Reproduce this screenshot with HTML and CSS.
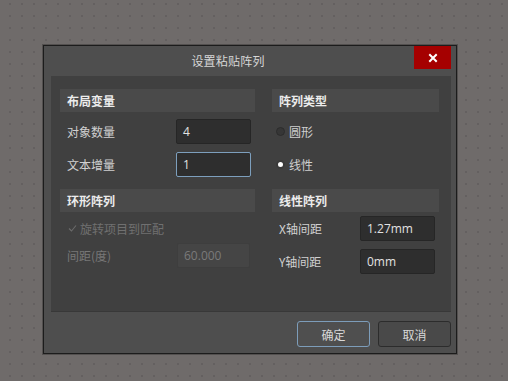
FILE: index.html
```html
<!DOCTYPE html>
<html>
<head>
<meta charset="utf-8">
<link rel="stylesheet" href="styles.css">
</head>
<body>
<div class="dialog">
  <div class="titlebar">
    <span class="title">设置粘贴阵列</span>
    <div class="close">
      <svg width="10" height="10" viewBox="0 0 10 10"><path d="M2 2 L8 8 M8 2 L2 8" stroke="#fff" stroke-width="2" stroke-linecap="square"/></svg>
    </div>
  </div>
  <div class="panel">
    <div class="col left">
      <div class="head">布局变量</div>
      <div class="row r1"><span class="label">对象数量</span><div class="input">4</div></div>
      <div class="row r2"><span class="label">文本增量</span><div class="input focus">1</div></div>
      <div class="head h2">环形阵列</div>
      <div class="check">
        <svg width="9" height="9" viewBox="0 0 9 9"><path d="M1 4.5 L3.5 7 L8 1.5" fill="none" stroke="#6b6b6b" stroke-width="1.1"/></svg>
        <span>旋转项目到匹配</span>
      </div>
      <div class="row r3"><span class="label dis">间距(度)</span><div class="input disabled">60.000</div></div>
    </div>
    <div class="col right">
      <div class="head">阵列类型</div>
      <div class="radio r1"><span class="dot"></span><span>圆形</span></div>
      <div class="radio r2"><span class="dot on"></span><span>线性</span></div>
      <div class="head h2">线性阵列</div>
      <div class="row r4"><span class="label">X轴间距</span><div class="input">1.27mm</div></div>
      <div class="row r5"><span class="label">Y轴间距</span><div class="input">0mm</div></div>
    </div>
  </div>
  <div class="footer">
    <div class="btn ok">确定</div>
    <div class="btn">取消</div>
  </div>
</div>
</body>
</html>
```

FILE: styles.css
```css
html, body {
  margin: 0;
  padding: 0;
}
body {
  width: 508px;
  height: 381px;
  overflow: hidden;
  background-color: #6f6b6a;
  background-image: radial-gradient(circle at 6px 6px, #646060 0.8px, transparent 1.2px);
  background-size: 12px 12px;
  background-position: 4px -2px;
  font-family: "Noto Sans CJK SC", "Noto Sans", sans-serif;
  font-size: 12px;
  color: #d4d4d4;
}
.dialog {
  margin: 45px 0 0 43px;
  width: 412px;
  height: 307px;
  background: #4e4e4e;
  border: 1px solid #1c1c1c;
  box-shadow: 0 0 0 1px rgba(0,0,0,0.25);
  display: flex;
  flex-direction: column;
}
.titlebar {
  height: 30px;
  display: flex;
  align-items: flex-start;
  justify-content: center;
  padding-right: 44px;
  position: relative;
  flex: none;
}
.title {
  margin-top: 6px;
  font-size: 12px;
  color: #d6d6d6;
  letter-spacing: 0.2px;
}
.close {
  position: absolute;
  top: 0;
  right: 5px;
  width: 37px;
  height: 23px;
  background: #a50000;
  display: flex;
  align-items: center;
  justify-content: center;
}
.panel {
  margin: 0 5px 0 7px;
  height: 236px;
  background: #404040;
  border-bottom: 1px solid #383838;
  box-sizing: border-box;
  display: flex;
  padding: 13px 12px 0 9px;
  gap: 17px;
  flex: none;
}
.col {
  display: flex;
  flex-direction: column;
}
.left { width: 195px; }
.right { width: 167px; }
.head {
  height: 23px;
  background: #4a4a4a;
  font-weight: bold;
  color: #ececec;
  display: flex;
  align-items: center;
  padding-left: 7px;
  font-size: 12px;
  flex: none;
}
.row {
  display: flex;
  align-items: center;
  justify-content: space-between;
  height: 25px;
}
.label {
  padding-left: 7px;
  color: #d0d0d0;
}
.label.dis { color: #777; }
.input {
  width: 75px;
  height: 25px;
  box-sizing: border-box;
  background: #2e2e2e;
  border: 1px solid #262626;
  border-radius: 2px;
  padding-left: 6px;
  display: flex;
  align-items: center;
  font-family: "Open Sans", "Noto Sans", sans-serif;
  font-size: 12px;
  color: #e2e2e2;
}
.input.focus {
  border-color: #7d9fbd;
}
.input.disabled {
  background: #454545;
  border-color: #3e3e3e;
  color: #7a7a7a;
}
.left .r1 { margin-top: 7px; margin-right: 4px; }
.left .r2 { margin-top: 8px; margin-right: 4px; }
.left .h2 { margin-top: 12px; }
.check {
  margin-top: 10px;
  height: 13px;
  display: flex;
  align-items: center;
  padding-left: 8px;
  color: #707070;
  gap: 3px;
}
.left .r3 { margin-top: 8px; margin-right: 5px; }
.left .r3 .input { width: 73px; }
.radio {
  display: flex;
  align-items: center;
  height: 25px;
  padding-left: 4px;
  gap: 4px;
  color: #cfcfcf;
}
.radio.r1 { margin-top: 7px; }
.radio.r2 { margin-top: 8px; }
.dot {
  width: 9px;
  height: 9px;
  box-sizing: border-box;
  border-radius: 50%;
  background: #363636;
  border: 1px solid #2c2c2c;
  display: inline-block;
}
.dot.on {
  background: #fff;
  border: 2px solid #3a3a3a;
}
.right .h2 { margin-top: 12px; }
.right .r4 { margin-top: 4px; margin-right: 4px; }
.right .r5 { margin-top: 8px; margin-right: 4px; }
.right .row .label { padding-left: 7px; }
.footer {
  flex: 1;
  display: flex;
  justify-content: flex-end;
  align-items: flex-start;
  padding: 9px 5px 0 0;
  gap: 8px;
}
.btn {
  width: 73px;
  height: 26px;
  box-sizing: border-box;
  border: 1px solid #2c2c2c;
  border-radius: 3px;
  background: #494949;
  display: flex;
  align-items: center;
  justify-content: center;
  color: #d8d8d8;
}
.btn.ok {
  border-color: #7d9dba;
  background: #4f4f4f;
}
```
